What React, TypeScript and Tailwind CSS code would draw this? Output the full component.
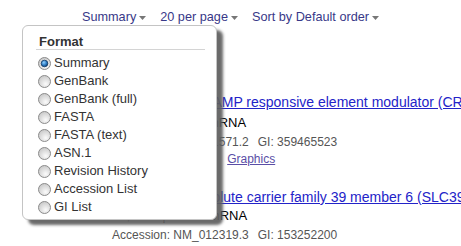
import React from "react";

const formats = [
  "Summary",
  "GenBank",
  "GenBank (full)",
  "FASTA",
  "FASTA (text)",
  "ASN.1",
  "Revision History",
  "Accession List",
  "GI List",
];

const Caret: React.FC = () => (
  <svg width="7" height="4" viewBox="0 0 7 4" className="ml-[3px] mt-[2px]">
    <polygon points="0,0 7,0 3.5,4" fill="#777" />
  </svg>
);

const Radio: React.FC<{ checked?: boolean; id: string }> = ({ checked, id }) => (
  <svg width="13" height="13" viewBox="0 0 13 13" className="shrink-0">
    <defs>
      <radialGradient id={`ring-${id}`} cx="0.6" cy="0.7" r="0.7">
        <stop offset="0" stopColor="#fbfbfb" />
        <stop offset="1" stopColor="#c9c9c9" />
      </radialGradient>
      <radialGradient id={`dot-${id}`} cx="0.4" cy="0.35" r="0.7">
        <stop offset="0" stopColor="#8fd0ff" />
        <stop offset="0.6" stopColor="#2a78c0" />
        <stop offset="1" stopColor="#0d3565" />
      </radialGradient>
    </defs>
    <circle cx="6.5" cy="6.5" r="6" fill={`url(#ring-${id})`} stroke="#8c8c8c" strokeWidth="1" />
    {checked && <circle cx="6.5" cy="6.5" r="3.3" fill={`url(#dot-${id})`} stroke="#123a66" strokeWidth="0.8" />}
  </svg>
);

interface Result {
  title: string;
  desc: string;
  accession: string;
  gi: string;
  links?: boolean;
}

const results: Result[] = [
  {
    title: "Homo sapiens cAMP responsive element modulator (CREM), transcript variant 25, mRNA",
    desc: "11,285 bp linear mRNA",
    accession: "NM_181571.2",
    gi: "359465523",
    links: true,
  },
  {
    title: "Homo sapiens solute carrier family 39 member 6 (SLC39A6), transcript variant 1, mRNA",
    desc: "13,580 bp linear mRNA",
    accession: "NM_012319.3",
    gi: "153252200",
  },
];

const ResultItem: React.FC<{ item: Result; first?: boolean }> = ({ item, first }) => (
  <div className={first ? "" : "mt-[20px]"}>
    <a href="#" className={`block text-[14px] text-[#2323c8] underline ${first ? "leading-[22px]" : "leading-[21px]"}`}>
      {item.title}
    </a>
    <div className={`text-[13px] text-black ${first ? "leading-[20px]" : "leading-[16px]"}`}>{item.desc}</div>
    <div className={`flex text-[12px] text-[#555] ${first ? "leading-[18px]" : "leading-[22px]"}`}>
      <span>Accession: {item.accession}</span>
      <span className="ml-[9px]">GI: {item.gi}</span>
    </div>
    {item.links && (
      <div className="flex gap-[14px] text-[12px] leading-[16px]">
        <a href="#" className="text-[#5a4ea6] underline">GenBank</a>
        <a href="#" className="text-[#5a4ea6] underline">FASTA</a>
        <a href="#" className="text-[#5a4ea6] underline">Graphics</a>
      </div>
    )}
  </div>
);

export default function App() {
  return (
    <div className="relative w-[461px] h-[246px] overflow-hidden bg-white whitespace-nowrap font-['Liberation_Sans',Arial,sans-serif]">
      {/* display settings bar */}
      <div className="flex justify-center pt-[9px] text-[12.7px] leading-[16px] text-[#383888]">
        <span className="flex items-center">Summary<Caret /></span>
        <span className="flex items-center ml-[14px]">20 per page<Caret /></span>
        <span className="flex items-center ml-[14px]">Sort by Default order<Caret /></span>
      </div>

      {/* results */}
      <div className="pl-[112px] pt-[66px]">
        {results.map((r, i) => (
          <ResultItem key={r.accession} item={r} first={i === 0} />
        ))}
      </div>

      {/* format menu */}
      <div className="absolute left-[22px] top-[25px] w-[195px] h-[195px] bg-white border border-[#c4c4c4] rounded-[6px] shadow-[6px_5px_3px_rgba(95,95,95,0.93)] pl-[13px] pr-[11px] pt-[8px]">
        <div className="border-b border-[#d4d4d4] pl-[3px] text-[13px] font-bold leading-[15px] text-[#333]">
          Format
        </div>
        <ul className="mt-[4px] pl-[2px]">
          {formats.map((f, i) => (
            <li key={f} className="flex items-center gap-[3px] h-[18px] text-[13px] text-[#333]">
              <Radio id={String(i)} checked={i === 0} />
              <span>{f}</span>
            </li>
          ))}
        </ul>
      </div>
    </div>
  );
}
